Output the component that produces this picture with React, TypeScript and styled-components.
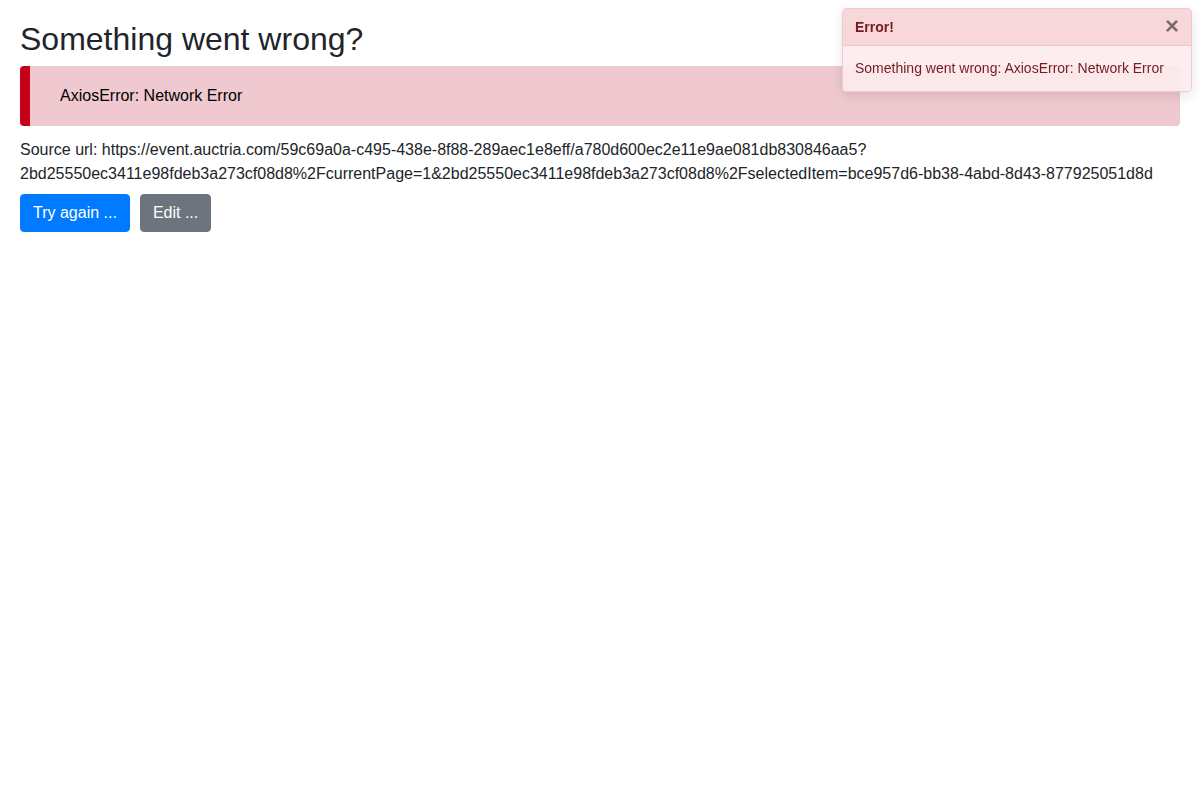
import React from "react";
import styled, { createGlobalStyle } from "styled-components";

const Global = createGlobalStyle`
  html, body { margin: 0; padding: 0; background: #fff; }
  body {
    font-family: "Liberation Sans", Arial, sans-serif;
    font-size: 16px;
    line-height: 1.5;
    color: #212529;
  }
  * { box-sizing: border-box; }
`;

const Page = styled.div`
  padding: 20px;
  display: flex;
  flex-direction: column;
`;

const Title = styled.h2`
  margin: 0 0 8px;
  font-size: 32px;
  font-weight: 500;
  line-height: 1.2;
  color: #212529;
`;

const Banner = styled.div`
  background: #efc9cf;
  border-left: 10px solid #c50018;
  border-radius: 4px;
  padding: 18px 30px;
  color: #000;
  font-size: 16px;
  line-height: 24px;
`;

const Source = styled.div`
  margin-top: 12px;
  line-height: 24px;
  word-break: break-all;
`;

const Actions = styled.div`
  display: flex;
  gap: 10px;
  margin-top: 8px;
`;

const Button = styled.button<{ $variant: "primary" | "secondary" }>`
  font-family: inherit;
  font-size: 16px;
  line-height: 24px;
  padding: 6px 12px;
  border-radius: 4px;
  border: 1px solid ${(p) => (p.$variant === "primary" ? "#007bff" : "#6c757d")};
  background: ${(p) => (p.$variant === "primary" ? "#007bff" : "#6c757d")};
  color: #fff;
  cursor: pointer;
`;

const Toast = styled.div`
  position: fixed;
  top: 8px;
  right: 8px;
  width: 350px;
  font-size: 14px;
  line-height: 21px;
  border: 1px solid #f5c6cb;
  border-radius: 4px;
  box-shadow: 0 4px 12px rgba(0, 0, 0, 0.1);
  overflow: hidden;
  color: #721c24;
`;

const ToastHeader = styled.div`
  display: flex;
  align-items: center;
  justify-content: space-between;
  padding: 8px 12px 7px;
  background: #f8d7da;
  border-bottom: 1px solid #f3c6cb;
`;

const ToastTitle = styled.strong`
  font-weight: 700;
`;

const Close = styled.button`
  border: 0;
  background: transparent;
  padding: 0;
  font-family: inherit;
  font-size: 24px;
  font-weight: 700;
  line-height: 1;
  color: #000;
  opacity: 0.5;
  cursor: pointer;
  margin-top: -4px;
`;

const ToastBody = styled.div`
  padding: 12px;
  background: rgba(252, 236, 238, 0.88);
`;

export default function App() {
  return (
    <>
      <Global />
      <Page>
        <Title>Something went wrong?</Title>
        <Banner>AxiosError: Network Error</Banner>
        <Source>
          Source url: https://event.auctria.com/59c69a0a-c495-438e-8f88-289aec1e8eff/a780d600ec2e11e9ae081db830846aa5?
          <br />
          2bd25550ec3411e98fdeb3a273cf08d8%2FcurrentPage=1&amp;2bd25550ec3411e98fdeb3a273cf08d8%2FselectedItem=bce957d6-bb38-4abd-8d43-877925051d8d
        </Source>
        <Actions>
          <Button $variant="primary">Try again ...</Button>
          <Button $variant="secondary">Edit ...</Button>
        </Actions>
      </Page>
      <Toast>
        <ToastHeader>
          <ToastTitle>Error!</ToastTitle>
          <Close aria-label="Close">×</Close>
        </ToastHeader>
        <ToastBody>Something went wrong: AxiosError: Network Error</ToastBody>
      </Toast>
    </>
  );
}
